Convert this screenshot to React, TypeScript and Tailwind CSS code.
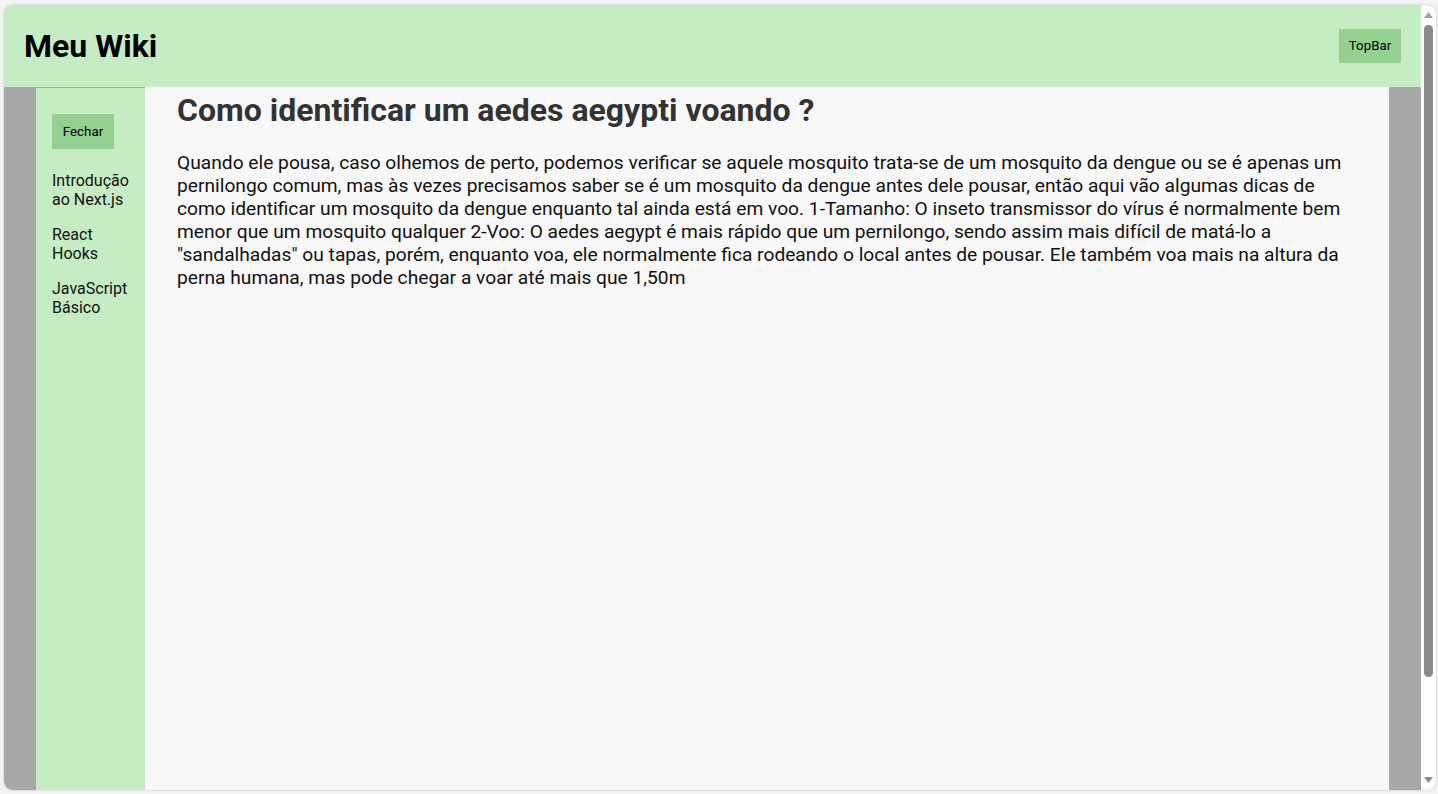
const links = ['Introdução ao Next.js', 'React Hooks', 'JavaScript Básico'];

const body =
  'Quando ele pousa, caso olhemos de perto, podemos verificar se aquele mosquito trata-se de um mosquito da dengue ou se é apenas um pernilongo comum, mas às vezes precisamos saber se é um mosquito da dengue antes dele pousar, então aqui vão algumas dicas de como identificar um mosquito da dengue enquanto tal ainda está em voo. 1-Tamanho: O inseto transmissor do vírus é normalmente bem menor que um mosquito qualquer 2-Voo: O aedes aegypt é mais rápido que um pernilongo, sendo assim mais difícil de matá-lo a "sandalhadas" ou tapas, porém, enquanto voa, ele normalmente fica rodeando o local antes de pousar. Ele também voa mais na altura da perna humana, mas pode chegar a voar até mais que 1,50m';

const Scrollbar = () => (
  <div className="w-[15px] bg-white flex flex-col items-center py-[4px]">
    <svg width="9" height="6" viewBox="0 0 9 6" className="mt-[3px]">
      <path d="M0 6 L4.5 0 L9 6 Z" fill="#a3a3a3" />
    </svg>
    <div className="w-[9px] flex-1 mt-[7px] mb-[100px] rounded-full bg-[#8b8b8b]"></div>
    <svg width="9" height="6" viewBox="0 0 9 6" className="mb-[3px]">
      <path d="M0 0 L4.5 6 L9 0 Z" fill="#8b8b8b" />
    </svg>
  </div>
);

export default function App() {
  return (
    <div
      className="w-[1438px] h-[794px] bg-[#f3f3f3] pt-[5px] pl-[4px] pr-[2px] pb-[4px] overflow-hidden"
      style={{ fontFamily: 'Roboto, "Noto Sans", sans-serif' }}
    >
      <div className="h-full flex rounded-[9px] overflow-hidden shadow-[0_0_2px_rgba(0,0,0,0.25)]">
        <div className="flex-1 flex flex-col">
          <header className="h-[82px] shrink-0 bg-[#c6ecc3] flex items-center justify-between px-[20px]">
            <h1 className="text-[32px] font-bold text-black leading-[38px]">Meu Wiki</h1>
            <button className="w-[62px] h-[34px] bg-[#94d090] text-[13.33px] text-black">TopBar</button>
          </header>

          <div className="flex-1 flex">
            <div className="w-[32px] bg-[#a8a8a8]"></div>
            <aside className="w-[109px] bg-[#c6ecc3] border-t border-[#a8a8a8] px-[16px] pt-[26px]">
              <button className="w-[62px] h-[35px] bg-[#94d090] text-[13.33px] text-black">Fechar</button>
              <nav className="mt-[22px] flex flex-col gap-[16px]">
                {links.map((l) => (
                  <a key={l} className="text-[16px] leading-[19px] text-[#111] cursor-pointer">
                    {l}
                  </a>
                ))}
              </nav>
            </aside>
            <main className="flex-1 bg-[#f8f8f8] px-[32px] pt-[4px]">
              <h2 className="text-[32px] font-bold text-[#333] leading-[38px]">
                Como identificar um aedes aegypti voando ?
              </h2>
              <p className="mt-[22px] text-[19.2px] leading-[23px] text-[#111]">{body}</p>
            </main>
            <div className="w-[32px] bg-[#a8a8a8]"></div>
          </div>
        </div>
        <Scrollbar />
      </div>
    </div>
  );
}
